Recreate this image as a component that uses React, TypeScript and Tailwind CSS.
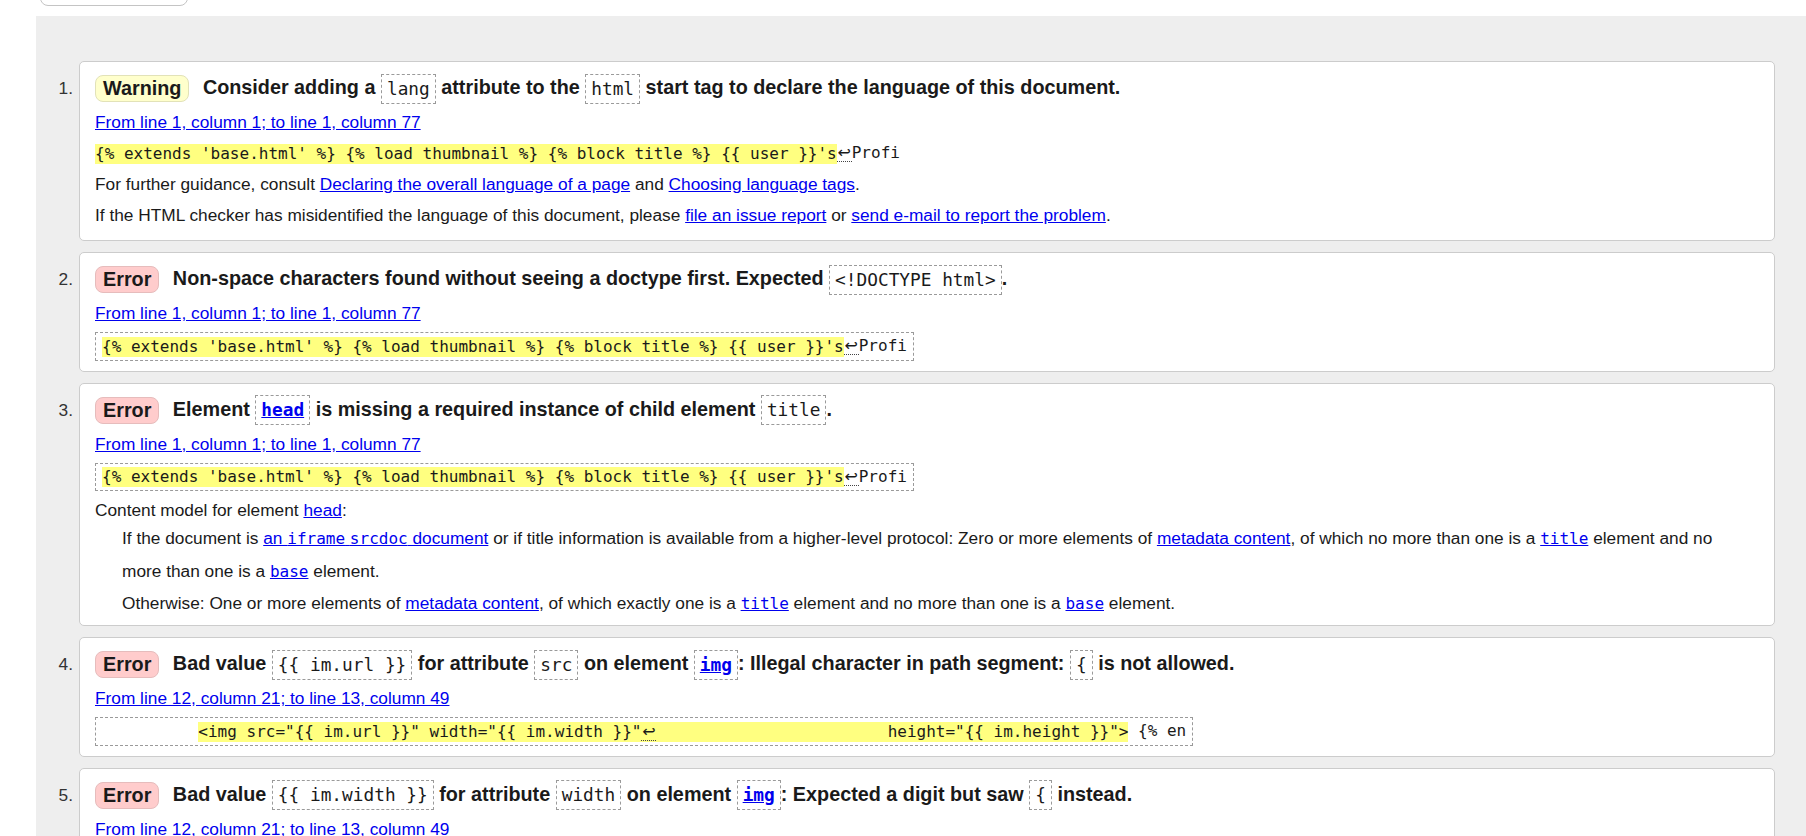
const mono = "font-['DejaVu_Sans_Mono',monospace]";

function Badge({ kind }: { kind: "Warning" | "Error" }) {
  const color =
    kind === "Warning"
      ? "bg-[#ffffcc] border-[#e2e2b8]"
      : "bg-[#ffcccc] border-[#e6bcbc]";
  return (
    <span
      className={`inline-block align-middle border rounded-[8px] px-[7px] leading-[25px] mr-[8px] ${color}`}
    >
      {kind}
    </span>
  );
}

function Tag({ children, link }: { children: string; link?: boolean }) {
  return (
    <span
      className={`inline-block align-middle border border-dashed border-[#9a9a9a] px-[5px] py-[3px] leading-[22px] font-normal text-[17.8px] whitespace-pre ${mono}`}
    >
      {link ? <a className="text-[#0000ee] underline font-bold">{children}</a> : children}
    </span>
  );
}

function Link({ children }: { children: React.ReactNode }) {
  return <a className="text-[#0000ee] underline cursor-pointer">{children}</a>;
}

function MonoLink({ children }: { children: string }) {
  return (
    <a className={`text-[#0000ee] underline text-[16px] ${mono}`}>{children}</a>
  );
}

function Hl({ children }: { children: React.ReactNode }) {
  return (
    <span className="inline-block align-middle bg-[#ffff80] leading-[20px] whitespace-pre">
      {children}
    </span>
  );
}

function Ret() {
  return (
    <span className="inline-block w-[15px] text-center border-b border-dotted border-[#444] leading-[17px] text-[16px] font-['DejaVu_Sans',sans-serif]">
      ↩
    </span>
  );
}

function Box({ children }: { children: React.ReactNode }) {
  return (
    <div>
      <span
        className={`inline-block border border-dashed border-[#9a9a9a] px-[6px] py-[3px] leading-[20px] text-[16px] whitespace-pre ${mono}`}
      >
        {children}
      </span>
    </div>
  );
}

function Row({ n, children }: { n: number; children: React.ReactNode }) {
  return (
    <div className="flex">
      <div className="w-[43px] shrink-0 text-right pr-[6px] pt-[15px] leading-[24px] text-[#333]">
        {n}.
      </div>
      <div className="flex-1 bg-white border border-[#cccccc] rounded-[5px] px-[15px] pt-[11px] pb-[10px] flex flex-col gap-[7px]">
        {children}
      </div>
    </div>
  );
}

function Head({ children }: { children: React.ReactNode }) {
  return (
    <div className="h-[30px] flex items-center">
      <p className="font-bold text-[19.8px] leading-[30px] whitespace-nowrap">{children}</p>
    </div>
  );
}

function From({ children }: { children: string }) {
  return (
    <p className="leading-[24px]">
      <Link>{children}</Link>
    </p>
  );
}

const extract = "{% extends 'base.html' %} {% load thumbnail %} {% block title %} {{ user }}'s";

export default function App() {
  return (
    <div className="h-[836px] overflow-hidden bg-white text-[17.3px] text-[#1a1a1a] font-['Liberation_Sans',Arial,sans-serif]">
      <div className="h-[16px] flex flex-col">
        <div className="ml-[40px] w-[148px] h-[28px] -mt-[22px] shrink-0 border border-[#c4c4c4] rounded-[8px] bg-white" />
      </div>

      <div className="ml-[36px] bg-[#eeeeee] pt-[45px] pr-[31px] pb-[40px] flex flex-col gap-[11px]">
        <Row n={1}>
          <Head>
            <Badge kind="Warning" /> Consider adding a <Tag>lang</Tag> attribute to the <Tag>html</Tag> start tag
            to declare the language of this document.
          </Head>
          <From>From line 1, column 1; to line 1, column 77</From>
          <p className={`leading-[24px] text-[16px] ${mono}`}>
            <Hl>{extract}</Hl>
            <Ret />
            Profi
          </p>
          <p className="leading-[24px]">
            For further guidance, consult <Link>Declaring the overall language of a page</Link> and{" "}
            <Link>Choosing language tags</Link>.
          </p>
          <p className="leading-[24px] mb-[3px]">
            If the HTML checker has misidentified the language of this document, please{" "}
            <Link>file an issue report</Link> or <Link>send e-mail to report the problem</Link>.
          </p>
        </Row>

        <Row n={2}>
          <Head>
            <Badge kind="Error" /> Non-space characters found without seeing a doctype first. Expected{" "}
            <Tag>{"<!DOCTYPE html>"}</Tag>.
          </Head>
          <From>From line 1, column 1; to line 1, column 77</From>
          <Box>
            <Hl>{extract}</Hl>
            <Ret />
            Profi
          </Box>
        </Row>

        <Row n={3}>
          <Head>
            <Badge kind="Error" /> Element <Tag link>head</Tag> is missing a required instance of child element{" "}
            <Tag>title</Tag>.
          </Head>
          <From>From line 1, column 1; to line 1, column 77</From>
          <Box>
            <Hl>{extract}</Hl>
            <Ret />
            Profi
          </Box>
          <div className="-mb-[4px]">
            <p className="leading-[24px]">
              Content model for element <Link>head</Link>:
            </p>
            <div className="pl-[27px]">
              <p className="leading-[32px]">
                If the document is{" "}
                <Link>
                  an <span className={`text-[16px] ${mono}`}>iframe</span>{" "}
                  <span className={`text-[16px] ${mono}`}>srcdoc</span> document
                </Link>{" "}
                or if title information is available from a higher-level protocol: Zero or more elements of{" "}
                <Link>metadata content</Link>, of which no more than one is a <MonoLink>title</MonoLink> element
                and no
                <br />
                more than one is a <MonoLink>base</MonoLink> element.
              </p>
              <p className="leading-[30px]">
                Otherwise: One or more elements of <Link>metadata content</Link>, of which exactly one is a{" "}
                <MonoLink>title</MonoLink> element and no more than one is a <MonoLink>base</MonoLink> element.
              </p>
            </div>
          </div>
        </Row>

        <Row n={4}>
          <Head>
            <Badge kind="Error" /> Bad value <Tag>{"{{ im.url }}"}</Tag> for attribute <Tag>src</Tag> on element{" "}
            <Tag link>img</Tag>: Illegal character in path segment: <Tag>{"{"}</Tag> is not allowed.
          </Head>
          <From>From line 12, column 21; to line 13, column 49</From>
          <Box>
            {"          "}
            <Hl>
              {'<img src="{{ im.url }}" width="{{ im.width }}"'}
              <Ret />
              {'                        height="{{ im.height }}">'}
            </Hl>
            {" {% en"}
          </Box>
        </Row>

        <Row n={5}>
          <Head>
            <Badge kind="Error" /> Bad value <Tag>{"{{ im.width }}"}</Tag> for attribute <Tag>width</Tag> on
            element <Tag link>img</Tag>: Expected a digit but saw <Tag>{"{"}</Tag> instead.
          </Head>
          <From>From line 12, column 21; to line 13, column 49</From>
          <Box>
            {"          "}
            <Hl>
              {'<img src="{{ im.url }}" width="{{ im.width }}"'}
              <Ret />
              {'                        height="{{ im.height }}">'}
            </Hl>
            {" {% en"}
          </Box>
        </Row>
      </div>
    </div>
  );
}
